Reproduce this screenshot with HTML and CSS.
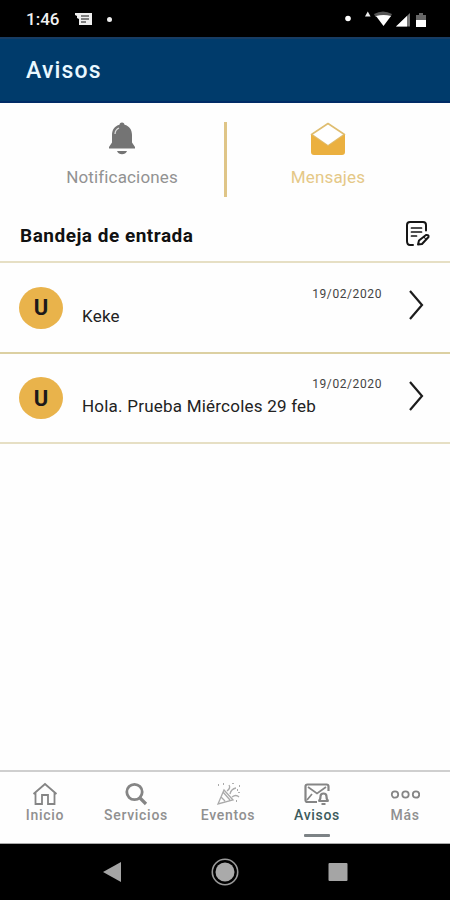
FILE: index.html
```html
<!DOCTYPE html>
<html lang="es">
<head>
  <meta charset="UTF-8" />
  <meta name="viewport" content="width=device-width, initial-scale=1.0" />
  <title>Avisos</title>
  <link rel="stylesheet" href="styles.css">
</head>
<body>
  <div class="status-bar">
    <span class="time">1:46</span>
    <svg class="message-icon" width="18" height="14" viewBox="0 0 18 14">
      <path d="M0 1h17v12H4V7L2 6V4L0 3z" fill="#eee" />
      <path d="M6 4h8M6 7h8M6 10h5" stroke="#111" stroke-width="1.2" />
    </svg>
    <span class="dot"></span>
    <svg class="system-icons" width="84" height="18" viewBox="0 0 84 18">
      <circle cx="6" cy="8.500" r="2.800" fill="#fff" />
      <path d="M23 6.500l2.800-5 2.800 5z" fill="#eee" />
      <path d="M32 4q9-5 18 0l-1.500 3h-15z" fill="#555" />
      <path d="M34 6q7.500-2 15 0L41.500 16z" fill="#fff" />
      <path d="M54 16.500L68 3v13.500z" fill="#777" />
      <path d="M54 16.500L65 6v10.500z" fill="#fff" />
      <path d="M74 5h3V3h4v2h3v5H74z" fill="#666" />
      <path d="M74 10h10v7H74z" fill="#fff" />
    </svg>
  </div>

  <header class="header">
    <h1>Avisos</h1>
  </header>

  <main class="content">
    <div class="tabs">
      <div class="tab">
        <svg width="28" height="34" viewBox="0 0 28 34">
          <path d="M14 .5c-1.700 0-2.500 1-2.500 2.300C6.500 4 4 8 4 13v7.500L1 25v1.500h26V25l-3-4.500V13c0-5-2.500-9-7.500-10.200C16.500 1.500 15.700.5 14 .5z" fill="#747474" />
          <path d="M7 12c.2-3 1.700-5 4-6" fill="none" stroke="#ddd" stroke-width="1.300" />
          <path d="M9 29h10c-1 2.200-2.700 3.200-5 3.200s-4-1-5-3.200z" fill="#747474" />
        </svg>
        <span class="tab-label">Notificaciones</span>
      </div>
      <div class="tab-divider"></div>
      <div class="tab active">
        <svg width="36" height="34" viewBox="0 0 36 34">
          <path d="M1.500 12.500L18 1.500l16.500 11L18 24z" fill="#fff" stroke="#dfbd70" stroke-width="1.600" stroke-linejoin="round" />
          <path d="M1 12.500L18 24l17-11.500V30q0 3-3 3H4q-3 0-3-3z" fill="#ebb03f" />
        </svg>
        <span class="tab-label">Mensajes</span>
      </div>
    </div>

    <div class="inbox-header">
      <h2>Bandeja de entrada</h2>
      <svg width="25" height="26" viewBox="0 0 25 26" fill="none" stroke="#161616" stroke-width="2" stroke-linecap="round" stroke-linejoin="round">
        <path d="M21 9.500V4q0-3-3-3H5Q2 1 2 4v16q0 4 3 4h3" />
        <path d="M6.500 7h10M6.500 11h10M6.500 15h5" stroke-width="1.700" />
        <path d="M13 23.500l1-4 7-5.500q3-.5 2.500 2L17 23z" stroke-width="2" />
        <path d="M19 16l2 2.500" stroke-width="1.200" />
      </svg>
    </div>

    <ul class="messages">
      <li class="message">
        <span class="avatar">U</span>
        <div class="message-body">
          <span class="date">19/02/2020</span>
          <span class="text">Keke</span>
        </div>
        <svg class="chevron" width="16" height="32" viewBox="0 0 16 32">
          <path d="M2 2l12 14L2 30" />
        </svg>
      </li>
      <li class="message">
        <span class="avatar">U</span>
        <div class="message-body">
          <span class="date">19/02/2020</span>
          <span class="text">Hola. Prueba Miércoles 29 feb</span>
        </div>
        <svg class="chevron" width="16" height="32" viewBox="0 0 16 32">
          <path d="M2 2l12 14L2 30" />
        </svg>
      </li>
    </ul>
  </main>

  <nav class="bottom-nav">
    <div class="nav-item">
      <svg width="26" height="24" viewBox="0 0 26 24">
        <path d="M1.500 12L13 2l11.500 10M3.500 10.500V22H10v-9h6v9h6.500V10.500" />
      </svg>
      <span>Inicio</span>
    </div>
    <div class="nav-item">
      <svg width="26" height="24" viewBox="0 0 26 24">
        <circle cx="11.500" cy="10" r="7.700" stroke-width="2.800" />
        <path d="M17 16l6 6" stroke-width="3.200" />
      </svg>
      <span>Servicios</span>
    </div>
    <div class="nav-item">
      <svg width="26" height="24" viewBox="0 0 26 24" class="party-icon">
        <path d="M3 22L9 8l9 10zM6 15l4 4M8 10l7 8" />
        <path d="M12 9q4-3 2-6M15 12q1-5 6-6M17 15q4-3 7 0" />
        <path d="M3 3h1M8 2h1M18 1v1M22 8h1M21 19h1M24 4h1M24 10v1" stroke-width="1.800" />
      </svg>
      <span>Eventos</span>
    </div>
    <div class="nav-item selected">
      <svg width="26" height="24" viewBox="0 0 26 24">
        <path d="M13 20H3.500q-2 0-2-2V4.500q0-2 2-2h19q2 0 2 2V9" />
        <path d="M4 5l9 6.500L22 5M3 18l5-6" stroke-width="1.700" />
        <path d="M14.500 19q2-1 2-4.500 0-3 3-3t3 3q0 3.500 2 4.500zM17.500 22h4" />
      </svg>
      <span>Avisos</span>
      <i class="indicator"></i>
    </div>
    <div class="nav-item">
      <svg width="30" height="24" viewBox="0 0 30 24">
        <circle cx="5" cy="12.500" r="3.200" />
        <circle cx="15.500" cy="12.500" r="3.200" />
        <circle cx="26" cy="12.500" r="3.200" />
      </svg>
      <span>Más</span>
    </div>
  </nav>

  <div class="system-nav">
    <svg width="20" height="22" viewBox="0 0 20 22">
      <path d="M1 11L19 1v20z" fill="#a5a5a5" />
    </svg>
    <svg width="28" height="28" viewBox="0 0 28 28">
      <circle cx="14" cy="14" r="12.700" fill="none" stroke="#9a9a9a" stroke-width="1.600" />
      <circle cx="14" cy="14" r="9.500" fill="#aaa" />
    </svg>
    <svg width="20" height="20" viewBox="0 0 20 20">
      <rect x=".5" y="1" width="19" height="18" rx="1" fill="#a5a5a5" />
    </svg>
  </div>
</body>
</html>
```
FILE: styles.css
```css
* {
  box-sizing: border-box;
}
body {
  font-family: Roboto, "Liberation Sans", sans-serif;
  background-color: #fefefe;
  color: #222;
  margin: 0;
  height: 900px;
  display: flex;
  flex-direction: column;
  overflow: hidden;
}
svg {
  display: block;
  flex-shrink: 0;
}
.status-bar {
  height: 37px;
  background-color: #000;
  color: #f2f2f2;
  display: flex;
  align-items: center;
  padding: 1px 24px 0 26px;
}
.time {
  width: 49px;
  font-size: 17px;
  font-weight: 500;
}
.dot {
  width: 5px;
  height: 5px;
  margin-left: 14px;
  border-radius: 50%;
  background-color: #eee;
}
.system-icons {
  margin-left: auto;
}
.header {
  height: 66px;
  padding: 0 26px;
  background-color: #003b6b;
  border-top: 2px solid #173c63;
  border-bottom: 2px solid #002b66;
  display: flex;
  align-items: center;
}
h1 {
  margin: 0;
  color: #e9f8ff;
  font-size: 23px;
  font-weight: 500;
  letter-spacing: 1.2px;
}
.content {
  flex: 1;
}
.tabs {
  height: 105px;
  padding-top: 19px;
  display: grid;
  grid-template-columns: 224px 3px 1fr;
}
.tab {
  display: flex;
  flex-direction: column;
  align-items: center;
  color: #929292;
  padding-left: 20px;
}
.tab-divider {
  height: 75px;
  background-color: #dfc587;
}
.tab.active {
  color: #e5c887;
  padding: 0 21px 0 0;
}
.tab-label {
  margin-top: 10px;
  font-size: 17px;
  line-height: 22px;
  letter-spacing: 0.15px;
}
.inbox-header {
  height: 53px;
  padding: 0 20px 2px 20px;
  display: flex;
  align-items: center;
  justify-content: space-between;
}
h2 {
  margin: 3px 0 0;
  font-size: 19px;
  font-weight: 700;
  letter-spacing: 0.5px;
  color: #111;
}
.messages {
  list-style: none;
  margin: 0;
  padding: 0;
  border-top: 2px solid #e6dfc4;
}
.message {
  height: 91px;
  padding: 0 26px 0 19px;
  display: flex;
  align-items: center;
  border-bottom: 2px solid #dcd0a2;
}
.message:last-child {
  height: 90px;
  border-bottom-color: #e6dfc4;
}
.avatar {
  width: 44px;
  height: 42px;
  border-radius: 50%;
  background-color: #e9b34b;
  color: #1d1a1a;
  font-size: 22px;
  font-weight: 700;
  display: flex;
  align-items: center;
  justify-content: center;
}
.message-body {
  width: 300px;
  margin: 0 26px 0 19px;
  display: flex;
  flex-direction: column;
}
.date {
  align-self: flex-end;
  font-size: 12px;
  line-height: 16px;
  letter-spacing: 0.6px;
  color: #444;
}
.text {
  margin-top: 4px;
  margin-bottom: 4px;
  font-size: 17px;
  line-height: 20px;
  letter-spacing: 0.22px;
}
.chevron {
  margin-bottom: 5px;
}
.chevron path {
  fill: none;
  stroke: #1c1c1c;
  stroke-width: 2.2;
}
.bottom-nav {
  height: 74px;
  padding-top: 10px;
  border-top: 2px solid #cfcfcf;
  border-bottom: 1px solid #aaa;
  display: grid;
  grid-template-columns: 90px 92px 92px 86px 90px;
}
.nav-item {
  display: flex;
  flex-direction: column;
  align-items: center;
  color: #909090;
  font-size: 14px;
  font-weight: 500;
  line-height: 16px;
  letter-spacing: 0.7px;
}
.nav-item svg {
  fill: none;
  stroke: #858585;
  stroke-width: 1.8;
}
.nav-item .party-icon {
  stroke: #aaa;
  stroke-width: 1.3;
}
.nav-item.selected {
  color: #3c5b5d;
}
.nav-item.selected svg {
  stroke-width: 2.2;
}
.nav-item span {
  margin-top: 1px;
}
.indicator {
  width: 26px;
  height: 3px;
  margin-top: 11px;
  border-radius: 1px;
  background-color: #7c8285;
}
.system-nav {
  height: 56px;
  background-color: #000;
  display: flex;
  align-items: center;
  justify-content: space-between;
  padding: 0 102px;
}
```
